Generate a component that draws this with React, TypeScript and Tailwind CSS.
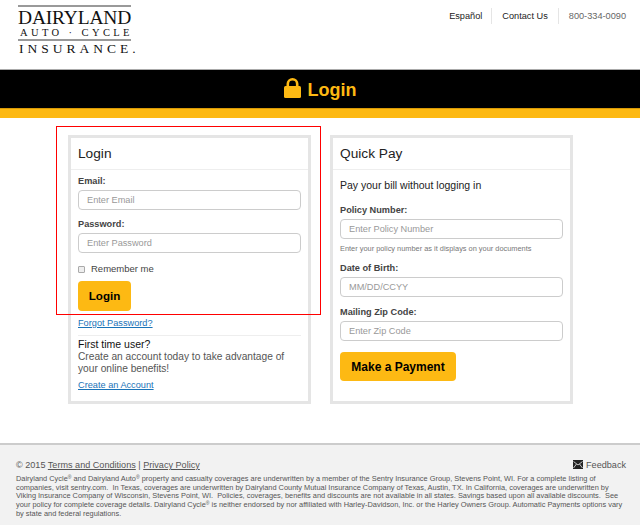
const Field = ({ label, placeholder, className = '' }: { label: string; placeholder: string; className?: string }) => (
  <div className={className}>
    <label className="block text-[9.2px] leading-[14px] font-bold text-[#444]">{label}</label>
    <input
      type="text"
      placeholder={placeholder}
      className="mt-[2px] block h-[20px] w-full rounded-[4px] border border-[#ccc] bg-white px-[8px] text-[9.2px] placeholder-[#999] focus:outline-none"
    />
  </div>
);

const App = () => {
  return (
    <div className="relative h-[525px] w-[640px] overflow-hidden bg-white font-['Liberation_Sans',Arial,sans-serif] text-[#333]">
      {/* top bar */}
      <header className="flex h-[69px] items-start justify-between pl-[18px] pr-[14px]">
        <div className="mt-[5px] w-[120px] font-['Liberation_Serif',serif] text-[#111]">
          <div className="h-[2px] w-[113px] bg-[#999]" />
          <div className="mt-[1px] text-[19.5px] leading-[20px] tracking-[-0.2px] whitespace-nowrap">DAIRYLAND</div>
          <div className="pl-[2px] text-[10.5px] leading-[10px] tracking-[3.4px] whitespace-nowrap">AUTO · CYCLE</div>
          <div className="mt-[1px] h-[2px] w-[113px] bg-[#999]" />
          <div className="mt-[1px] pl-[1px] text-[13.5px] leading-[14px] tracking-[4px] whitespace-nowrap">INSURANCE.</div>
        </div>
        <nav className="mt-[8px] flex items-center text-[9.2px] leading-[16px]">
          <a className="pr-[9px] text-[#222]">Español</a>
          <a className="border-l border-[#e5e5e5] px-[10px] text-[#222]">Contact Us</a>
          <span className="border-l border-[#e5e5e5] pl-[10px] text-[#666]">800-334-0090</span>
        </nav>
      </header>

      {/* page title */}
      <div className="flex h-[39px] items-center justify-center gap-[7px] border-t border-[#aaa] bg-black text-[#fdb913]">
        <svg width="17" height="20" viewBox="0 0 17 20" className="mb-[2px] fill-[#fdb913]">
          <path d="M2.5 8V6a6 6 0 0 1 12 0v2h-2.6V6a3.4 3.4 0 0 0-6.8 0v2z" />
          <rect x="0" y="8" width="17" height="12" rx="1.5" />
        </svg>
        <h1 className="mt-[2px] text-[18px] font-bold">Login</h1>
      </div>
      <div className="h-[10px] border-t border-[#d99a06] bg-[#fdb913]" />

      {/* cards */}
      <main className="mt-[17px] flex gap-[19px] pl-[68px]">
        <section className="h-[269px] w-[243px] border-[3px] border-[#e5e5e5]">
          <h2 className="h-[32px] border-b border-[#eee] pl-[7px] text-[13.7px] leading-[31px] text-[#222]">Login</h2>
          <div className="px-[7px]">
            <Field label="Email:" placeholder="Enter Email" className="mt-[4px]" />
            <Field label="Password:" placeholder="Enter Password" className="mt-[7px]" />
            <label className="mt-[9px] flex items-center gap-[6px] text-[9.5px] leading-[14px] text-[#444]">
              <input type="checkbox" className="h-[7px] w-[7px] appearance-none rounded-[1px] border border-[#aaa] bg-[#eee]" />
              Remember me
            </label>
            <button className="mt-[5px] block h-[30px] w-[53px] rounded-[4px] bg-[#fdb913] text-[11.6px] font-bold text-black">Login</button>
            <a className="mt-[5px] block text-[9.2px] leading-[14px] text-[#1a73b8] underline">Forgot Password?</a>
            <div className="mt-[5px] border-t border-[#eee] pt-[1px]">
              <p className="text-[10.5px] leading-[14px] text-[#111]">First time user?</p>
              <p className="text-[10.2px] leading-[12px] text-[#555]">
                Create an account today to take advantage of your online benefits!
              </p>
              <a className="mt-[3px] block text-[9.2px] leading-[14px] text-[#1a73b8] underline">Create an Account</a>
            </div>
          </div>
        </section>

        <section className="h-[269px] w-[243px] border-[3px] border-[#e5e5e5]">
          <h2 className="h-[32px] border-b border-[#eee] pl-[7px] text-[13.7px] leading-[31px] text-[#222]">Quick Pay</h2>
          <div className="px-[7px]">
            <p className="mt-[8px] text-[10.5px] leading-[14px] text-[#222]">Pay your bill without logging in</p>
            <Field label="Policy Number:" placeholder="Enter Policy Number" className="mt-[11px]" />
            <p className="mt-[5px] text-[7.4px] leading-[10px] text-[#777]">Enter your policy number as it displays on your documents</p>
            <Field label="Date of Birth:" placeholder="MM/DD/CCYY" className="mt-[7px]" />
            <Field label="Mailing Zip Code:" placeholder="Enter Zip Code" className="mt-[8px]" />
            <button className="mt-[11px] block h-[29px] w-[116px] rounded-[4px] bg-[#fdb913] text-[12px] font-bold text-black">Make a Payment</button>
          </div>
        </section>
      </main>

      {/* footer */}
      <footer className="mt-[39px] h-[82px] border-t-2 border-[#ccc] bg-[#f2f2f2] pl-[16px] pr-[14px] pt-[13px]">
        <div className="flex items-center justify-between text-[9.1px] leading-[14px] text-[#555]">
          <span>
            © 2015 <a className="underline">Terms and Conditions</a> | <a className="underline">Privacy Policy</a>
          </span>
          <span className="flex items-center gap-[3px]">
            <svg width="10" height="9" viewBox="0 0 10 9" className="-mt-[2px]">
              <rect width="10" height="9" fill="#222" />
              <path d="M0.5 1.5 5 5l4.5-3.5M0.5 8 3.5 4M9.5 8 6.5 4" fill="none" stroke="#eee" strokeWidth="0.8" />
            </svg>
            Feedback
          </span>
        </div>
        <p className="mt-[3px] text-[7.4px] leading-[8.7px] whitespace-nowrap text-[#555]">
          Dairyland Cycle<sup className="text-[5px]">®</sup> and Dairyland Auto<sup className="text-[5px]">®</sup> property and casualty coverages are underwritten by a member of the Sentry Insurance Group, Stevens Point, WI. For a complete listing of<br />
          companies, visit sentry.com.&nbsp; In Texas, coverages are underwritten by Dairyland County Mutual Insurance Company of Texas, Austin, TX. In California, coverages are underwritten by<br />
          Viking Insurance Company of Wisconsin, Stevens Point, WI.&nbsp; Policies, coverages, benefits and discounts are not available in all states. Savings based upon all available discounts.&nbsp; See<br />
          your policy for complete coverage details. Dairyland Cycle<sup className="text-[5px]">®</sup> is neither endorsed by nor affiliated with Harley-Davidson, Inc. or the Harley Owners Group. Automatic Payments options vary<br />
          by state and federal regulations.
        </p>
      </footer>

      {/* annotation box drawn over the login card */}
      <div className="absolute left-[56px] top-[126px] h-[189px] w-[265px] border border-[#f00]" />
    </div>
  );
};

export default App;
